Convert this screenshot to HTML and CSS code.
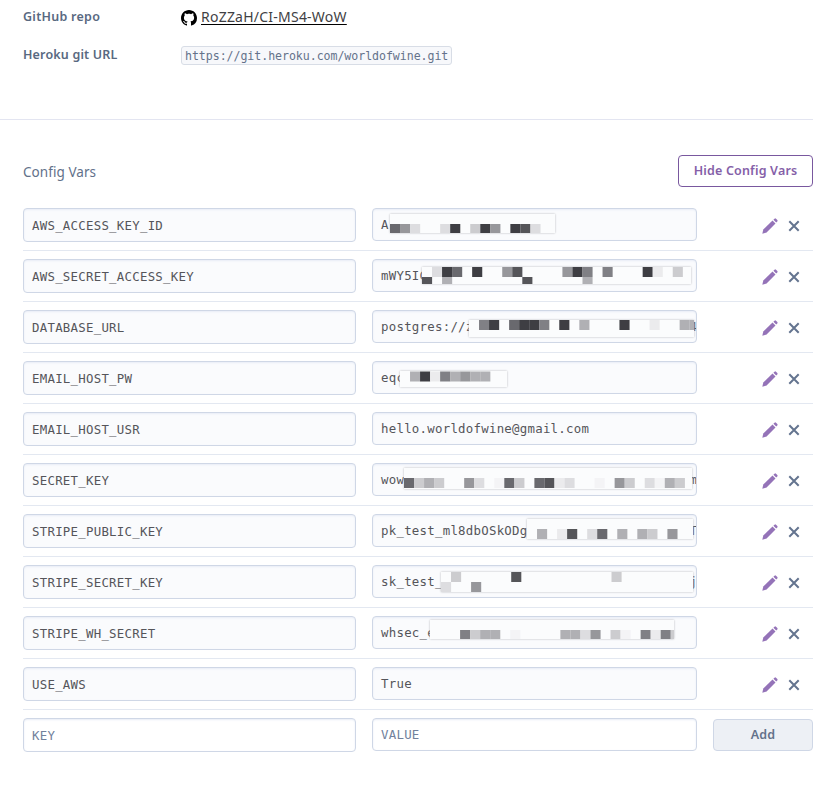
FILE: index.html
```html
<!DOCTYPE html>
<html lang="en">
<head>
<meta charset="utf-8">
<title>Settings</title>
<link rel="stylesheet" href="styles.css">
</head>
<body>
<svg class="sprite" aria-hidden="true">
  <symbol id="pencil" viewBox="0 0 16 16"><path d="M.3 15.7 1.3 11.5 10.5 2.5 13.5 5.5 4.6 14.5Z"/><path d="M11.4 1.8 12.5.7Q13.3 0 14 .7L15.3 2Q16 2.7 15.3 3.5L14.2 4.6Z"/></symbol>
  <symbol id="cross" viewBox="0 0 12 12"><path d="M1.3 1.3 10.7 10.7M10.7 1.3 1.3 10.7"/></symbol>
</svg>
<section class="info">
  <div class="info-row">
    <div class="label">GitHub repo</div>
    <svg class="github" viewBox="0 0 16 16"><path d="M8 0C3.58 0 0 3.58 0 8c0 3.54 2.29 6.53 5.47 7.59.4.07.55-.17.55-.38 0-.19-.01-.82-.01-1.49-2.01.37-2.53-.49-2.69-.94-.09-.23-.48-.94-.82-1.13-.28-.15-.68-.52-.01-.53.63-.01 1.08.58 1.23.82.72 1.21 1.87.87 2.33.66.07-.52.28-.87.51-1.07-1.78-.2-3.64-.89-3.64-3.95 0-.87.31-1.59.82-2.15-.08-.2-.36-1.02.08-2.12 0 0 .67-.21 2.2.82.64-.18 1.32-.27 2-.27s1.36.09 2 .27c1.53-1.04 2.2-.82 2.2-.82.44 1.1.16 1.92.08 2.12.51.56.82 1.27.82 2.15 0 3.07-1.87 3.75-3.65 3.95.29.25.54.73.54 1.48 0 1.07-.01 1.93-.01 2.2 0 .21.15.46.55.38A8.01 8.01 0 0 0 16 8c0-4.42-3.58-8-8-8Z"/></svg>
    <a class="repo">RoZZaH/CI-MS4-WoW</a>
  </div>
  <div class="info-row">
    <div class="label wide">Heroku git URL</div>
    <code class="url">https://git.heroku.com/worldofwine.git</code>
  </div>
</section>
<section class="config">
  <header class="config-head">
    <h2>Config Vars</h2>
    <button class="btn hide">Hide Config Vars</button>
  </header>
  <div id="vars"></div>
  <div class="row new">
    <div class="field key">KEY</div>
    <div class="field value">VALUE</div>
    <button class="btn add">Add</button>
  </div>
</section>
<script src="script.js"></script>
</body>
</html>
```
FILE: styles.css
```css
* { box-sizing: border-box; }
body { margin: 0; width: 829px; height: 799px; overflow: hidden; background: #fff; font-family: "Noto Sans", sans-serif; color: #596981; }
.sprite { display: none; }
.info { width: 813px; height: 120px; padding: 0 0 0 23px; border-bottom: 1px solid #e3e5f1; }
.info-row { display: flex; align-items: center; height: 39px; }
.info-row:first-child { height: 36px; }
.label { width: 158px; font-size: 12.5px; font-weight: 600; letter-spacing: .27px; padding-bottom: 3px; }
.label.wide { letter-spacing: .17px; }
.github { width: 16px; height: 16px; margin-right: 4px; fill: #000; }
.repo { font-size: 14px; letter-spacing: .23px; color: #3f3f44; text-decoration: underline; text-decoration-color: #000; text-decoration-thickness: 1px; text-underline-offset: 2px; padding-bottom: 4px; }
.url { height: 19px; padding: 0 3px; border: 1px solid #d8dde6; border-radius: 3px; background: #f7f8fb; font: 11.6px/18px "DejaVu Sans Mono", monospace; letter-spacing: -.052px; color: #64728a; white-space: pre; }
.config { width: 813px; padding: 35px 0 0 23px; }
.config-head { display: flex; justify-content: space-between; height: 45px; }
h2 { margin: 0; font-size: 13.5px; font-weight: 400; line-height: 34px; letter-spacing: .06px; color: #62718a; }
.btn { display: block; height: 32px; padding: 0; border-radius: 4px; font: 600 12.5px/28px "Noto Sans", sans-serif; letter-spacing: .18px; }
.hide { width: 135px; border: 1px solid #79589f; background: #fff; color: #8560a8; }
.row { display: flex; height: 51px; padding-top: 8px; border-bottom: 1px solid #e3e8f1; }
.new { border: 0; }
.field { height: 34px; padding: 0 8px; border: 1px solid #cfd7e6; border-radius: 4px; background: #fafbfd; box-shadow: inset 0 1px 2px #e8edf6; font: 12.4px/33px "DejaVu Sans Mono", monospace; letter-spacing: .25px; color: #55555a; white-space: pre; }
.key { width: 333px; margin-right: 16px; }
.value { position: relative; width: 325px; height: 33px; line-height: 31px; overflow: hidden; }
.new .field { background: #fff; color: #71819c; }
.actions { display: flex; align-items: center; gap: 10px; height: 34px; margin-left: 65px; padding-top: 1px; }
.pencil { width: 16px; height: 16px; fill: #9473b8; }
.cross { width: 12px; height: 12px; fill: none; stroke: #64748f; stroke-width: 2; }
.add { width: 100px; margin: 1px 0 0 16px; border: 1px solid #cfd7e6; background: #edf0f5; color: #63728a; }
.mask { position: absolute; margin: -1px 0 0 -1px; background: #fbfcfd; box-shadow: 0 0 2px #b8b8bd; }
```
FILE: script.js
```js
const shades = { a: "#3e3e43", b: "#555559", c: "#69696e", d: "#808085", e: "#97979b", f: "#b0b0b4", g: "#cccccf", h: "#dddde0", i: "#ebebed", j: "#f4f4f6" };
const tail = (text, last) => text.padEnd(40) + last;

// mask: [left, top, width, height, first cell offset, cell rows]
const vars = [
  ["AWS_ACCESS_KEY_ID", "A", [18, 6, 165, 19, 10, ["ceh..ha.gae.abh"]]],
  ["AWS_SECRET_ACCESS_KEY", "mWY5IC", [50, 8, 269, 17, 0, [".hac.a..eb....ead.d...ai.g", "b.f.......b.....f"]]],
  ["DATABASE_URL", tail("postgres://z", "4"), [97, 10, 225, 17, 0, [".da.caad.a.f...a..i..ff"]]],
  ["EMAIL_HOST_PW", "eqc", [28, 10, 107, 16, 0.5, [".faidfeff"]]],
  ["EMAIL_HOST_USR", "hello.worldofwine@gmail.com"],
  ["SECRET_KEY", tail("wow", "m"), [32, 5, 288, 21, 10, ["cgfg..eh.jcg.cbih..j.eg.hjfg"]]],
  ["STRIPE_PUBLIC_KEY", tail("pk_test_ml8dbOSkODg", "T"), [155, 5, 166, 20, 10, [".f.ib.hc.f.fg.e"]]],
  ["STRIPE_SECRET_KEY", tail("sk_test_", "j"), [69, 7, 252, 20, 0, [".g.....b.........g", "h..e"]]],
  ["STRIPE_WH_SECRET", "whsec_e", [58, 4, 244, 19, 10, ["...dgff.j....ffhe.gj.didg"]]],
  ["USE_AWS", "True"]
];

function maskSvg([x, y, w, h, top, rows]) {
  const cells = rows.map((row, r) => [...row].map((c, i) =>
    c === "." ? "" : `<rect x="${i * 10.03}" y="${top + r * 10}" width="10.1" height="10" fill="${shades[c]}"/>`).join("")).join("");
  return `<svg class="mask" style="left:${x}px;top:${y}px;width:${w}px;height:${h}px">${cells}</svg>`;
}

document.getElementById("vars").innerHTML = vars.map(([key, value, mask]) => `
  <div class="row">
    <div class="field key">${key}</div>
    <div class="field value">${value}${mask ? maskSvg(mask) : ""}</div>
    <div class="actions">
      <svg class="pencil"><use href="#pencil"/></svg>
      <svg class="cross"><use href="#cross"/></svg>
    </div>
  </div>`).join("");
```
